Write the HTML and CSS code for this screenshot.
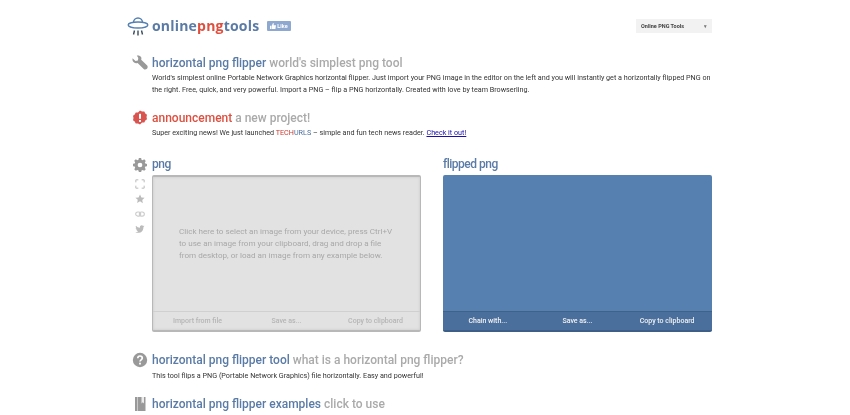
FILE: index.html
```html
<!DOCTYPE html>
<html lang="en">
<head>
<meta charset="UTF-8">
<title>Horizontal PNG Flipper</title>
<link rel="stylesheet" href="styles.css">
</head>
<body>
<div class="page">

<!-- Header -->
<div class="header">
  <svg class="logo" viewBox="0 0 22 22" fill="none" stroke="#5580b0" stroke-width="1.4">
    <path d="M6.500 7.500a4.500 4.500 0 0 1 9 0"/>
    <ellipse cx="11" cy="10" rx="9.800" ry="3"/>
    <path d="M7.500 15.500l-1 4M11 15.500v5M14.500 15.500l1 4" stroke="#3a4a5c"/>
  </svg>
  <div class="brand">online<span class="red">png</span>tools</div>
  <div class="like">
    <svg class="thumb" viewBox="0 0 8 8"><path fill="#fff" d="M0 3.500h1.700V8H0zM2.300 3.500 4 0c.8 0 1.100.7 1 1.300L4.800 3H8l-.8 5H2.300z"/></svg>
    Like
  </div>
  <div class="picker"><span>Online PNG Tools</span><span class="caret">▾</span></div>
</div>

<!-- Intro -->
<div class="block intro">
  <svg class="side-icon" viewBox="0 0 16 16"><path fill="#999" d="M4.800.5c1.800-.4 3.600.2 4.300 1.600.4.900.4 1.800.1 2.700l6 5.600c.7.700.7 2.300-.2 3.300-1 1-2.500 1.100-3.300.3L5.600 8C4.200 8.500 2.800 8.200 1.800 7.200.6 6.200.2 4.800.6 3.200l2.900 2.700 2.400-.4.400-2.400z"/></svg>
  <div class="body">
    <h2><b>horizontal png flipper</b> world's simplest png tool</h2>
    <p>World's simplest online Portable Network Graphics horizontal flipper. Just import your PNG image in the editor on the left and you will instantly get a horizontally flipped PNG on the right. Free, quick, and very powerful. Import a PNG – flip a PNG horizontally. Created with love by team Browserling.</p>
  </div>
</div>

<!-- Announcement -->
<div class="block news">
  <svg class="side-icon" viewBox="0 0 16 16"><path fill="#d9534f" d="M8 1l2 1.100 2.300-.1 1 2 1.700 1.300-.5 2.200.5 2.200L13.300 11l-1 2-2.300-.1L8 15l-2-1.100-2.300.1-1-2L1 10.700l.5-2.200L1 6.300 2.700 5l1-2L6 3.100z" transform="translate(0 -.5)"/><rect x="7" y="3.800" width="2" height="5" fill="#fff"/><rect x="7" y="10" width="2" height="1.900" fill="#fff"/></svg>
  <div class="body">
    <h2><b class="red">announcement</b> a new project!</h2>
    <p>Super exciting news! We just launched <span class="tech-red">TECH</span><span class="tech-blue">URLS</span> – simple and fun tech news reader. <a href="#">Check it out!</a></p>
  </div>
</div>

<!-- Tools -->
<div class="tools">
  <div class="tool-icons">
    <svg class="gear" viewBox="0 0 16 16"><path fill="#999" fill-rule="evenodd" d="M6.700 0h2.600l.4 2 1.300.6 1.800-1.100 1.800 1.800-1.100 1.800.6 1.300 2 .4v2.600l-2 .4-.6 1.300 1.100 1.800-1.800 1.800-1.800-1.100-1.300.6-.4 2H6.700l-.4-2-1.300-.6-1.800 1.100-1.800-1.800 1.100-1.800-.6-1.300-2-.4V6.700l2-.4.600-1.300-1.100-1.800 1.800-1.800 1.800 1.100 1.300-.6zM8 5.300a2.700 2.700 0 1 0 0 5.400 2.700 2.700 0 0 0 0-5.400z"/></svg>
    <svg class="mini" viewBox="0 0 12 12" fill="none" stroke="#bbb" stroke-width="1.200"><path d="M1 4V1h3M8 1h3v3M11 8v3H8M4 11H1V8"/></svg>
    <svg class="mini" viewBox="0 0 12 12"><path fill="#bbb" d="M6 .5l1.700 3.600 3.800.5-2.800 2.700.7 3.900L6 8.800l-3.400 1.900.7-3.900L.5 4.600l3.800-.5z"/></svg>
    <svg class="mini" viewBox="0 0 12 12" fill="none" stroke="#ccc" stroke-width="1.300"><rect x=".8" y="3.500" width="6" height="5" rx="2.500"/><rect x="5.200" y="3.500" width="6" height="5" rx="2.500"/></svg>
    <svg class="mini" viewBox="0 0 12 12"><path fill="#bbb" d="M11.500 2.600c-.4.200-.8.300-1.300.4.500-.3.800-.7 1-1.200-.4.300-.9.400-1.400.5a2.300 2.300 0 0 0-3.900 2.100C4 4.300 2.300 3.400 1.200 2c-.6 1-.3 2.300.7 3-.4 0-.7-.1-1-.3 0 1.100.8 2.100 1.800 2.300-.3.100-.7.100-1 0 .3.900 1.100 1.600 2.100 1.600-1 .8-2.200 1.100-3.400 1 3.800 2.400 9.700.6 9.700-5.800.5-.3.900-.7 1.200-1.200z"/></svg>
  </div>
  <div class="tool">
    <h3>png</h3>
    <div class="panel input">
      <div class="hint">Click here to select an image from your device, press Ctrl+V to use an image from your clipboard, drag and drop a file from desktop, or load an image from any example below.</div>
      <div class="actions"><span>Import from file</span><span>Save as...</span><span>Copy to clipboard</span></div>
    </div>
  </div>
  <div class="tool">
    <h3>flipped png</h3>
    <div class="panel output">
      <div class="hint"></div>
      <div class="actions"><span>Chain with...</span><span>Save as...</span><span>Copy to clipboard</span></div>
    </div>
  </div>
</div>

<!-- What is -->
<div class="block what">
  <svg class="side-icon" viewBox="0 0 16 16"><circle cx="8" cy="8" r="7.200" fill="#999"/><path d="M5.800 6.300c0-3 4.500-3 4.500-.2 0 1.800-2.300 1.700-2.300 3.500" fill="none" stroke="#fff" stroke-width="1.700"/><rect x="7.100" y="10.700" width="1.800" height="1.800" fill="#fff"/></svg>
  <div class="body">
    <h2><b>horizontal png flipper tool</b> what is a horizontal png flipper?</h2>
    <p>This tool flips a PNG (Portable Network Graphics) file horizontally. Easy and powerful!</p>
  </div>
</div>

<!-- Examples -->
<div class="block examples">
  <svg class="side-icon" viewBox="0 0 16 16"><path fill="#999" d="M3 1h10.500v14H3z"/><path fill="#fff" d="M5 1h.8v14H5z" opacity=".6"/><path fill="#fff" d="M9.500 1H12v6.500L10.800 6.300 9.500 7.500z" opacity=".8"/></svg>
  <div class="body">
    <h2><b>horizontal png flipper examples</b> click to use</h2>
  </div>
</div>

</div>
</body>
</html>
```

FILE: styles.css
```css
body{margin:0;background:#fff;font-family:Roboto,"Liberation Sans",sans-serif;font-size:7.2px;line-height:12px;color:#333;height:415px;overflow:hidden;}
.page{width:580px;margin-left:132px;will-change:transform;}
.red{color:#de4f3f;}
a{color:#1a0dab;}

.header{display:flex;align-items:center;height:55px;padding-bottom:3px;box-sizing:border-box;}
.logo{width:22px;height:22px;margin-left:-5px;margin-right:3px;flex:none;}
.brand{font-family:"Open Sans",sans-serif;font-size:14px;font-weight:700;letter-spacing:.2px;color:#5a7ba6;}
.like{margin-left:8px;background:#8fa8d0;color:#fff;font-size:5.500px;font-weight:700;line-height:10px;padding:0 3px;border-radius:1px;display:flex;align-items:center;gap:1px;}
.thumb{width:6px;height:6px;}
.picker{margin-left:auto;width:76px;height:14px;background:#f2f2f2;display:flex;align-items:center;justify-content:space-between;padding:0 5px;box-sizing:border-box;font-size:5.500px;font-weight:700;color:#444;}
.caret{color:#777;font-size:5px;}

.block{display:flex;gap:4px;}
.side-icon{flex:0 0 16px;width:16px;height:16px;}
.body{flex:1;}
h2{margin:0 0 1px;font-size:12px;line-height:16px;font-weight:500;color:#aaa;}
h2 b{font-weight:500;color:#5a7ba6;}
h2 b.red{color:#de4f3f;}
p{margin:0;}
.intro{margin-bottom:14px;}
.news{margin-bottom:17px;}
.tech-red{color:#c9372c;}
.tech-blue{color:#4a6f9c;}

.tools{display:flex;margin-bottom:20px;}
.tool-icons{flex:0 0 16px;margin-right:4px;display:flex;flex-direction:column;align-items:center;}
.gear{width:14px;height:14px;margin:2px 0 7px;}
.mini{width:10px;height:10px;margin-bottom:5px;}
.tool{width:269px;}
.tool + .tool{margin-left:22px;}
h3{margin:0 0 3px;font-size:12px;line-height:16px;font-weight:500;color:#5a7ba6;letter-spacing:-.5px;}
.panel{height:157px;box-sizing:border-box;border-radius:2px;display:flex;flex-direction:column;}
.panel.input{background:#e2e2e2;border:1px solid #b8b8b8;border-width:2px 1px 2px 1px;box-shadow:inset 0 0 3px rgba(0,0,0,.12);}
.panel.output{background:#5580b0;border-bottom:2px solid #3d5f87;}
.hint{flex:1;padding:48px 26px 0;font-size:8.100px;line-height:12px;color:#a8a8a8;}
.actions{display:grid;grid-template-columns:repeat(3,1fr);text-align:center;height:18px;align-items:center;font-size:7px;font-weight:500;}
.input .actions{border-top:1px solid #d0d0d0;color:#b5b5b5;}
.output .actions{background:#4a6f9c;border-top:1px solid #3f6288;color:#f2f2f2;}

.what h2{margin-bottom:2px;}
.what{margin-bottom:14px;}
```
